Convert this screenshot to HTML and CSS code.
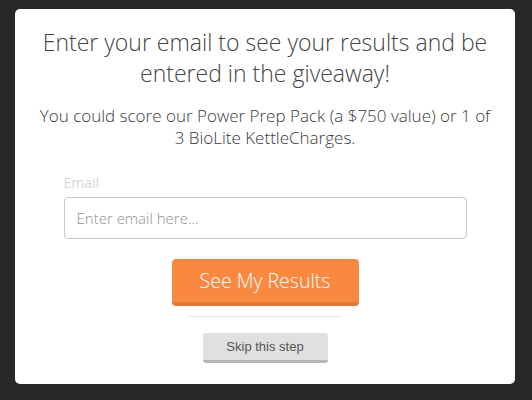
FILE: index.html
```html
<!DOCTYPE html>
<html lang="en">
<head>
<meta charset="utf-8">
<title>Giveaway</title>
<link rel="stylesheet" href="styles.css">
</head>
<body>
<div class="card">
  <h1 class="title">Enter your email to see your results and be entered in the giveaway!</h1>
  <p class="sub">You could score our Power Prep Pack (a $750 value) or 1 of 3 BioLite KettleCharges.</p>
  <form class="form">
    <label class="label" for="email">Email</label>
    <input class="input" id="email" type="email" placeholder="Enter email here...">
    <button class="primary" type="button">See My Results</button>
    <div class="divider"></div>
    <button class="skip" type="button">Skip this step</button>
  </form>
</div>
</body>
</html>
```
FILE: styles.css
```css
html, body {
  margin: 0;
  padding: 0;
  background: #27282a;
}
body {
  padding: 9px 17px 16px 15px;
  font-family: "Open Sans", "Liberation Sans", sans-serif;
}
.card {
  box-sizing: border-box;
  width: 500px;
  height: 375px;
  background: #ffffff;
  border-radius: 5px;
  padding: 18px 22px 0;
  display: flex;
  flex-direction: column;
  align-items: center;
}
.title {
  margin: 0;
  font-size: 23px;
  font-weight: 300;
  line-height: 31px;
  color: #444444;
  text-align: center;
}
.sub {
  margin: 16px 0 0;
  font-size: 17px;
  font-weight: 300;
  line-height: 22px;
  color: #3a3a3a;
  text-align: center;
}
.form {
  width: 403px;
  margin-top: 25px;
  display: flex;
  flex-direction: column;
  align-items: center;
}
.label {
  align-self: flex-start;
  font-size: 14px;
  line-height: 18px;
  color: #d6d6d6;
}
.input {
  box-sizing: border-box;
  width: 403px;
  height: 42px;
  margin-top: 5px;
  padding: 0 12px;
  border: 1px solid #c8c8c8;
  border-radius: 4px;
  font-family: "Open Sans", "Liberation Sans", sans-serif;
  font-size: 15px;
  font-weight: 300;
  color: #444;
  background: #fff;
}
.input::placeholder {
  color: #8f8f8f;
}
.primary {
  box-sizing: border-box;
  width: 187px;
  height: 47px;
  margin-top: 20px;
  border: 0;
  border-bottom: 4px solid #e47a36;
  border-radius: 4px;
  background: #f8893f;
  color: #ffffff;
  font-family: "Open Sans", "Liberation Sans", sans-serif;
  font-size: 19.5px;
  font-weight: 300;
  padding: 0;
}
.divider {
  width: 152px;
  height: 1px;
  margin-top: 10px;
  background: #e6e0da;
}
.skip {
  box-sizing: border-box;
  width: 125px;
  height: 30px;
  margin-top: 16px;
  border: 0;
  border-bottom: 3px solid #b6b6b6;
  border-radius: 3px;
  background: #e0e0e0;
  color: #555555;
  font-family: "Liberation Sans", Arial, sans-serif;
  font-size: 13px;
  padding: 0;
}
```
